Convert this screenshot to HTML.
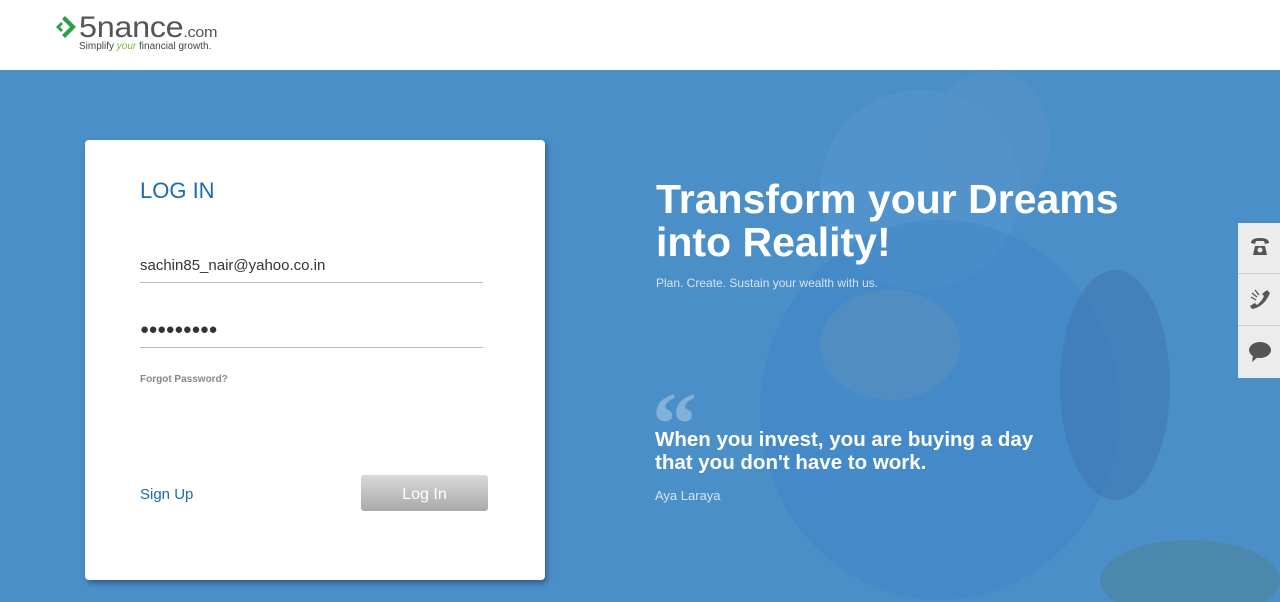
<!DOCTYPE html>
<html><head><meta charset="utf-8"><style>
*{margin:0;padding:0;box-sizing:border-box}
body{width:1280px;height:602px;overflow:hidden;font-family:"Liberation Sans",sans-serif;background:#fff;position:relative}
.hdr{height:70px;background:#fff;position:relative}
.hero{position:absolute;top:70px;left:0;width:1280px;height:532px;background:#4b8fc9;overflow:hidden}
.blob{position:absolute;border-radius:50%}
.card{position:absolute;left:85px;top:140px;width:460px;height:440px;background:#fff;border-radius:4px;box-shadow:2px 3px 6px rgba(0,0,0,.35)}
.in{position:absolute;left:55px;width:343px;border-bottom:1px solid #b8bcc4;font-size:15px;color:#333}
</style></head><body>
<div class="hdr">
 <svg style="position:absolute;left:54px;top:14px" width="26" height="26" viewBox="0 0 26 26"><path d="M11 2 L22 13 L11 24 L8 21 L16 13 L8 5Z" fill="#2e9e4a"/><path d="M7 8 L2 13 L7 18 L9 16 L6 13 L9 10Z" fill="#2e9e4a"/></svg>
 <div style="position:absolute;left:79px;top:11px;font-size:30px;color:#555;letter-spacing:-0.3px;transform:scaleX(1.08);transform-origin:left">5nance<span style="font-size:15px">.com</span></div>
 <div style="position:absolute;left:79px;top:41px;font-size:10px;color:#444">Simplify <i style="color:#7cb53a">your</i> financial growth.</div>
</div>
<div class="hero">
 <div class="blob" style="left:820px;top:20px;width:200px;height:200px;background:#5b9cd4;opacity:.35"></div>
 <div class="blob" style="left:760px;top:150px;width:360px;height:380px;background:#3f86c7;opacity:.5"></div>
 <div class="blob" style="left:820px;top:220px;width:140px;height:110px;background:#6a93b8;opacity:.35"></div>
 <div class="blob" style="left:930px;top:0px;width:120px;height:140px;background:#5a94c6;opacity:.4"></div>
 <div class="blob" style="left:1060px;top:200px;width:110px;height:230px;background:#3b6fae;opacity:.45"></div>
 <div class="blob" style="left:1100px;top:470px;width:180px;height:80px;background:#4d7f8f;opacity:.5"></div>
 <div style="position:absolute;left:656px;top:108px;color:#fff;font-weight:bold;font-size:41px;line-height:43px">Transform your Dreams<br>into Reality!</div>
 <div style="position:absolute;left:656px;top:206px;color:#d5e5f3;font-size:12px">Plan. Create. Sustain your wealth with us.</div>
 <div style="position:absolute;left:652px;top:310px;color:rgba(255,255,255,.3);font-size:90px;font-family:'Liberation Serif',serif;font-weight:bold;line-height:90px">“</div>
 <div style="position:absolute;left:655px;top:358px;color:#fff;font-weight:bold;font-size:20.5px;line-height:23px">When you invest, you are buying a day<br>that you don't have to work.</div>
 <div style="position:absolute;left:655px;top:418px;color:#d5e5f3;font-size:13px">Aya Laraya</div>
</div>
<div style="position:absolute;left:1238px;top:223px;width:42px;height:155px;background:#ececec">
 <div style="height:51px;border-bottom:1px solid #ccc;position:relative"><svg style="position:absolute;left:10px;top:12px" width="24" height="24" viewBox="0 0 24 24"><path d="M3 8 Q3 3 12 3 Q21 3 21 8 L17 9 L16 6 L8 6 L7 9Z" fill="#555"/><path d="M5 20 L7 11 L17 11 L19 20Z" fill="#555"/><circle cx="12" cy="15" r="2.5" fill="#ececec"/></svg></div>
 <div style="height:52px;border-bottom:1px solid #ccc;position:relative"><svg style="position:absolute;left:10px;top:13px" width="24" height="24" viewBox="0 0 24 24"><path d="M19 3 L22 6 Q16 20 4 22 L2 19 L7 16 L9 18 Q14 14 16 9 L14 7Z" fill="#555"/><path d="M4 6 L9 10 M3 10 L8 13 M7 3 L11 8" stroke="#555" stroke-width="1.3"/></svg></div>
 <div style="position:relative;height:52px"><svg style="position:absolute;left:10px;top:14px" width="24" height="24" viewBox="0 0 24 24"><ellipse cx="12" cy="10" rx="11" ry="8" fill="#555"/><path d="M5 15 L4 22 L10 17Z" fill="#555"/></svg></div>
</div>
<div class="card">
 <div style="position:absolute;left:55px;top:38px;font-size:22px;color:#1a6bb0">LOG IN</div>
 <div class="in" style="top:117px;height:26px">sachin85_nair@yahoo.co.in</div>
 <div class="in" style="top:181px;height:27px;font-size:15px;letter-spacing:-0.5px">●●●●●●●●●</div>
 <div style="position:absolute;left:55px;top:234px;font-size:10px;color:#888;font-weight:bold">Forgot Password?</div>
 <div style="position:absolute;left:55px;top:346px;font-size:15px;color:#1a6bb0">Sign Up</div>
 <div style="position:absolute;left:276px;top:335px;width:127px;height:36px;border-radius:3px;background:linear-gradient(#d9d9d9,#a9a9a9);color:#fff;font-size:16px;text-align:center;line-height:40px">Log In</div>
</div>
</body></html>
